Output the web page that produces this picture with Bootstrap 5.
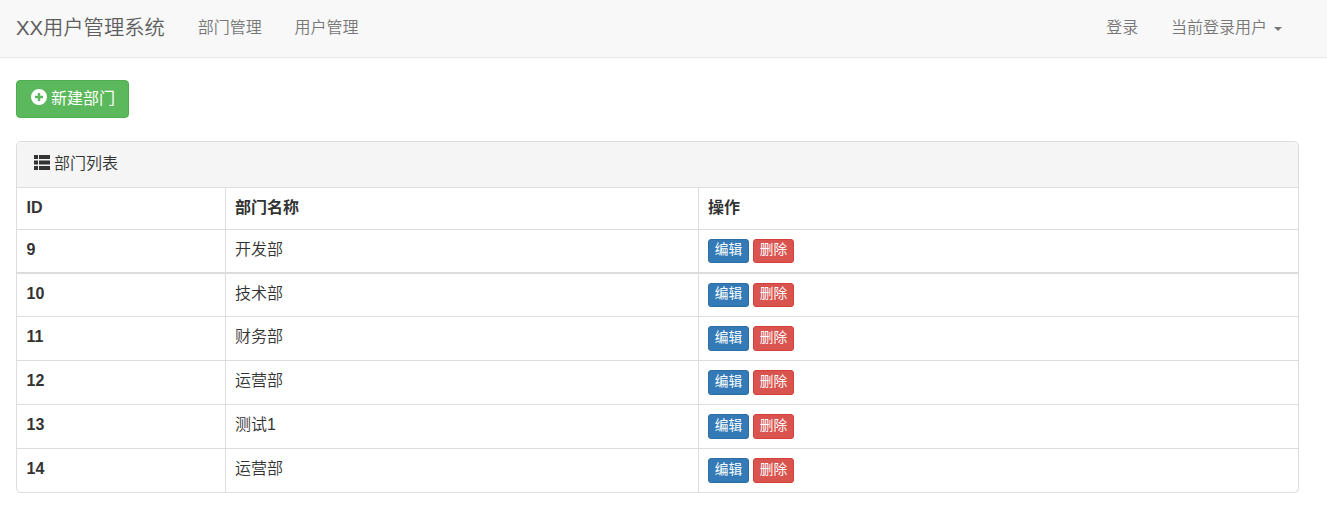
<!DOCTYPE html>
<html lang="zh-CN">
<head>
<meta charset="utf-8">
<title>XX用户管理系统</title>
<link href="https://cdn.jsdelivr.net/npm/bootstrap@5.3.0/dist/css/bootstrap.min.css" rel="stylesheet">
<style>
body{font-family:"Liberation Sans","Noto Sans CJK SC",sans-serif;font-size:16px;line-height:23px;color:#333;background:#fff;overflow:hidden}
.topbar{height:58px;background:#f8f8f8;border-bottom:1px solid #e7e7e7;padding:0 45px 2px 16px;font-weight:350}
.topbar .navbar-brand{font-size:20.3px;line-height:24px;color:#5e5e5e;margin:0 16.6px 0 0;padding:0}
.topbar .nav-link{color:#777;padding:0 16.400px;line-height:24px;white-space:nowrap}
.topbar .dropdown-toggle::after{margin-left:7px;border-top:4px solid;border-right:4.5px solid transparent;border-left:4.5px solid transparent;vertical-align:2px}
.topbar .nav-link.dropdown-toggle{padding-right:0}
.page-body{padding:22px 28px 0 16px}
.btn-new{height:38px;width:113px;padding:0 0 0 14px;font-size:16px;line-height:20px;border-radius:4px;color:#fff;background:#5cb85c;border:1px solid #4cae4c}
.btn-new:hover{color:#fff;background:#449d44}
.dept-panel{margin-top:23px;border:1px solid #ddd;border-radius:5px;box-shadow:0 1px 1px rgba(0,0,0,.05)}
.dept-panel .card-header{height:46px;background:#f5f5f5;border-bottom:1px solid #ddd;padding:0 17px 2px;font-weight:350}
.dept-table{table-layout:fixed;border-collapse:separate;border-spacing:0;color:#333;margin:0}
.dept-table>:not(caption)>*>*{padding:8px 9px 0;line-height:23px;vertical-align:top;border:0 solid #ddd;border-width:0 1px 1px 0;background:transparent;box-shadow:none;color:#333}
.dept-table td{font-weight:350}
.dept-table>:not(caption)>*>:first-child{padding-left:9.6px}
.dept-table>:not(caption)>*>:last-child{border-right:0}
.dept-table thead tr{height:42px}
.dept-table tbody tr{height:44px}
.dept-table tbody tr:nth-child(1)>*{border-bottom-width:2px}
.dept-table tbody tr:nth-child(2),.dept-table tbody tr:last-child{height:43px}
.dept-table tbody tr:last-child>*{border-bottom:0}
.dept-table .ops{padding-top:1px}
.btn-row{width:41px;height:25px;padding:0 0 2px;font-size:13.7px;line-height:21px;border-radius:3px;color:#fff;font-weight:400}
tr:nth-child(-n+2) .btn-row{height:24px;line-height:20px}
.btn-edit{background:#337ab7;border:1px solid #2e6da4}
.btn-del{background:#d9534f;border:1px solid #d43f3a}
.col-id{width:209px}.col-name{width:473px}
</style>
</head>
<body>
<nav class="topbar d-flex align-items-center">
  <a class="navbar-brand" href="#">XX用户管理系统</a>
  <ul class="nav me-auto">
    <li class="nav-item"><a class="nav-link" href="#">部门管理</a></li>
    <li class="nav-item"><a class="nav-link" href="#">用户管理</a></li>
  </ul>
  <ul class="nav">
    <li class="nav-item"><a class="nav-link" href="#">登录</a></li>
    <li class="nav-item dropdown"><a class="nav-link dropdown-toggle" href="#" data-bs-toggle="dropdown">当前登录用户</a></li>
  </ul>
</nav>
<main class="page-body">
  <a class="btn btn-new d-flex align-items-center" href="#">
    <svg width="16" height="16" viewBox="0 0 16 16" style="margin:-4px 4px 0 0"><path fill="#fff" fill-rule="evenodd" d="M8 0a8 8 0 1 1 0 16A8 8 0 0 1 8 0ZM6.800 4v2.800H4v2.400h2.800V12h2.400V9.200H12V6.800H9.200V4Z"/></svg>新建部门</a>
  <div class="card dept-panel">
    <div class="card-header d-flex align-items-center">
      <svg width="16" height="15" viewBox="0 0 16 15" style="margin:-2px 4px 0 0" fill="#333"><path d="M0 0h4v4H0zM5 0H16v4H5zM0 5.500h4v4H0zM5 5.500H16v4H5zM0 11h4v4H0zM5 11H16v4H5z"/></svg>部门列表
    </div>
    <table class="table dept-table">
      <colgroup><col class="col-id"><col class="col-name"><col class="col-ops"></colgroup>
      <thead><tr><th>ID</th><th>部门名称</th><th>操作</th></tr></thead>
      <tbody>
        <tr><th>9</th><td>开发部</td><td><div class="d-flex gap-1 ops"><a class="btn btn-row btn-edit" href="#">编辑</a><a class="btn btn-row btn-del" href="#">删除</a></div></td></tr>
        <tr><th>10</th><td>技术部</td><td><div class="d-flex gap-1 ops"><a class="btn btn-row btn-edit" href="#">编辑</a><a class="btn btn-row btn-del" href="#">删除</a></div></td></tr>
        <tr><th>11</th><td>财务部</td><td><div class="d-flex gap-1 ops"><a class="btn btn-row btn-edit" href="#">编辑</a><a class="btn btn-row btn-del" href="#">删除</a></div></td></tr>
        <tr><th>12</th><td>运营部</td><td><div class="d-flex gap-1 ops"><a class="btn btn-row btn-edit" href="#">编辑</a><a class="btn btn-row btn-del" href="#">删除</a></div></td></tr>
        <tr><th>13</th><td>测试1</td><td><div class="d-flex gap-1 ops"><a class="btn btn-row btn-edit" href="#">编辑</a><a class="btn btn-row btn-del" href="#">删除</a></div></td></tr>
        <tr><th>14</th><td>运营部</td><td><div class="d-flex gap-1 ops"><a class="btn btn-row btn-edit" href="#">编辑</a><a class="btn btn-row btn-del" href="#">删除</a></div></td></tr>
      </tbody>
    </table>
  </div>
</main>
<script src="https://cdn.jsdelivr.net/npm/bootstrap@5.3.0/dist/js/bootstrap.bundle.min.js"></script>
</body>
</html>
